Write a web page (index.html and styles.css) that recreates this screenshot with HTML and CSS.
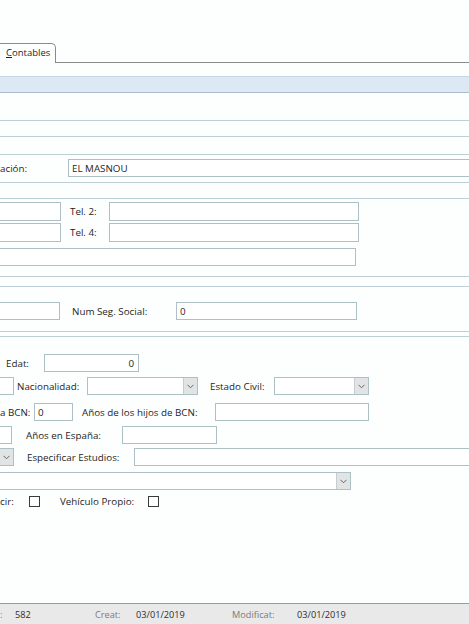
FILE: index.html
```html
<!DOCTYPE html>
<html lang="es">
<head>
<meta charset="utf-8">
<title>Ficha</title>
<link rel="stylesheet" href="styles.css">
</head>
<body>
<div class="page">
  <div class="tabs">
    <div class="tab"><span class="ul">C</span>ontables</div>
    <div class="tab-fill"></div>
  </div>
  <div class="band"></div>

  <div class="hl m27"></div>
  <div class="hl m15"></div>
  <div class="hl m17"></div>

  <div class="row r-pob">
    <div class="lbl w-pob">ación:</div>
    <div class="box w-pobbox">EL MASNOU</div>
  </div>

  <div class="hl m5"></div>
  <div class="hl m15"></div>

  <div class="row h19 r-tel1">
    <div class="box cut w101"></div>
    <div class="lbl ml9 w39">Tel. 2:</div>
    <div class="box w250"></div>
  </div>
  <div class="row h19 r-tel2">
    <div class="box cut w101"></div>
    <div class="lbl ml9 w39">Tel. 4:</div>
    <div class="box w250"></div>
  </div>
  <div class="row r-addr">
    <div class="box cut w396"></div>
  </div>

  <div class="hl m10"></div>
  <div class="hl m9"></div>

  <div class="row r-nss">
    <div class="box cut w100"></div>
    <div class="lbl ml12 w104">Num Seg. Social:</div>
    <div class="box w181">0</div>
  </div>

  <div class="hl m11"></div>
  <div class="hl m4"></div>

  <div class="row r-edat">
    <div class="lbl ml6 w38">Edat:</div>
    <div class="box w95 right">0</div>
  </div>

  <div class="row r-nac">
    <div class="box cut w54"></div>
    <div class="lbl ml3 w70">Nacionalidad:</div>
    <div class="combo w111"><span class="cval"></span><span class="btn"><svg width="7" height="5" viewBox="0 0 7 5"><path d="M0.5 0.8 L3.5 3.8 L6.5 0.8" fill="none" stroke="#666" stroke-width="1"/></svg></span></div>
    <div class="lbl ml12 w64">Estado Civil:</div>
    <div class="combo w95"><span class="cval"></span><span class="btn"><svg width="7" height="5" viewBox="0 0 7 5"><path d="M0.5 0.8 L3.5 3.8 L6.5 0.8" fill="none" stroke="#666" stroke-width="1"/></svg></span></div>
  </div>

  <div class="row r-bcn">
    <div class="lbl w34">a BCN:</div>
    <div class="box w39">0</div>
    <div class="lbl ml9 w133">Años de los hijos de BCN:</div>
    <div class="box w154"></div>
  </div>

  <div class="row r-esp">
    <div class="box cut w52"></div>
    <div class="lbl ml14 w96">Años en España:</div>
    <div class="box w95"></div>
  </div>

  <div class="row r-est">
    <div class="combo cut60 w74"><span class="cval"></span><span class="btn"><svg width="7" height="5" viewBox="0 0 7 5"><path d="M0.5 0.8 L3.5 3.8 L6.5 0.8" fill="none" stroke="#666" stroke-width="1"/></svg></span></div>
    <div class="lbl ml13 w107">Especificar Estudios:</div>
    <div class="box w340"></div>
  </div>

  <div class="row r-cmb">
    <div class="combo cut60 w411"><span class="cval"></span><span class="btn"><svg width="7" height="5" viewBox="0 0 7 5"><path d="M0.5 0.8 L3.5 3.8 L6.5 0.8" fill="none" stroke="#666" stroke-width="1"/></svg></span></div>
  </div>

  <div class="row r-chk">
    <div class="lbl w29">cir:</div>
    <div class="chk"></div>
    <div class="lbl ml20 w88">Vehículo Propio:</div>
    <div class="chk"></div>
  </div>

  <div class="status">
    <span class="s-lbl s-w1">:</span>
    <span class="s-val s-w2">582</span>
    <span class="s-lbl s-w3">Creat:</span>
    <span class="s-val s-w4">03/01/2019</span>
    <span class="s-lbl s-w5">Modificat:</span>
    <span class="s-val">03/01/2019</span>
  </div>
</div>
</body>
</html>
```

FILE: styles.css
```css
* { box-sizing: border-box; }
html, body { margin: 0; padding: 0; background: #fdfefe; }
body {
  font-family: "Open Sans", "Noto Sans", "DejaVu Sans", sans-serif;
  font-size: 9.8px;
  color: #1f1f1f;
}
.page {
  width: 469px;
  height: 624px;
  overflow: hidden;
  display: flex;
  flex-direction: column;
}

/* tabs */
.tabs { display: flex; height: 20px; margin-top: 43px; flex: none; }
.tab {
  margin-left: -5px;
  width: 61px;
  height: 20px;
  border: 1px solid #8a8a8a;
  border-bottom: none;
  border-top-right-radius: 5px;
  background: #fdfefe;
  padding-left: 10px;
  line-height: 18px;
  font-size: 9.5px;
  color: #1f1f1f;
}
.ul { text-decoration: underline; }
.tab-fill { flex: 1; border-bottom: 1px solid #8a8a8a; }

.band {
  margin-top: 13px;
  height: 17px;
  flex: none;
  background: #dce9f4;
  border-top: 1px solid #c4d8e6;
  border-bottom: 1px solid #a9bdcb;
}

/* horizontal group lines */
.hl { height: 1px; flex: none; background: #bcd0d5; }
.m4 { margin-top: 4px; }
.m5 { margin-top: 5px; }
.m9 { margin-top: 9px; }
.m10 { margin-top: 10px; }
.m11 { margin-top: 11px; }
.m15 { margin-top: 15px; }
.m17 { margin-top: 17px; }
.m27 { margin-top: 27px; }

/* rows */
.row { display: flex; align-items: center; height: 18px; flex: none; }
.row > * { flex: none; height: 100%; }
.h19 { height: 19px; }
.r-pob { margin-top: 4px; }
.r-tel1 { margin-top: 3px; }
.r-tel2 { margin-top: 2px; }
.r-addr { margin-top: 6px; }
.r-nss { margin-top: 15px; }
.r-edat { margin-top: 17px; }
.r-nac { margin-top: 5px; }
.r-bcn { margin-top: 8px; }
.r-esp { margin-top: 5px; }
.r-est { margin-top: 4px; }
.r-cmb { margin-top: 6px; }
.r-chk { margin-top: 6px; height: 11px; }

.lbl { display: flex; align-items: center; white-space: nowrap; overflow: visible; }
.box {
  border: 1px solid #adc0c5;
  background: #ffffff;
  padding-left: 3px;
  display: flex;
  align-items: center;
  white-space: nowrap;
  color: #1f1f1f;
}
.box.right { justify-content: flex-end; padding-right: 4px; }
.cut { margin-left: -40px; }
.cut60 { margin-left: -60px; }

.combo {
  border: 1px solid #adc0c5;
  background: #fff;
  display: flex;
}
.combo .cval { flex: 1; }
.combo .btn {
  width: 14px;
  background: #e1e4e5;
  border-left: 1px solid #c7cdcf;
  display: flex;
  align-items: center;
  justify-content: center;
}

.chk {
  width: 11px;
  height: 11px !important;
  border: 1px solid #3a3a3a;
  background: #fff;
}

.w-pob { width: 68px; }
.w-pobbox { width: 410px; }

.ml3 { margin-left: 3px; }
.ml6 { margin-left: 6px; }
.ml9 { margin-left: 9px; }
.ml12 { margin-left: 12px; }
.ml13 { margin-left: 13px; }
.ml14 { margin-left: 14px; }
.ml20 { margin-left: 20px; }

.w29 { width: 29px; }
.w34 { width: 34px; }
.w38 { width: 38px; }
.w39 { width: 39px; }
.w52 { width: 52px; }
.w54 { width: 54px; }
.w64 { width: 64px; }
.w70 { width: 70px; }
.w74 { width: 74px; }
.w88 { width: 88px; }
.w95 { width: 95px; }
.w96 { width: 96px; }
.w100 { width: 100px; }
.w101 { width: 101px; }
.w104 { width: 104px; }
.w107 { width: 107px; }
.w111 { width: 111px; }
.w133 { width: 133px; }
.w154 { width: 154px; }
.w181 { width: 181px; }
.w250 { width: 250px; }
.w340 { width: 340px; }
.w396 { width: 396px; }
.w411 { width: 411px; }

/* status bar */
.status {
  margin-top: auto;
  height: 21px;
  flex: none;
  background: #e9e9e9;
  border-top: 1px solid #9a9a9a;
  display: flex;
  align-items: center;
  font-size: 9.2px;
  white-space: nowrap;
}
.s-lbl { color: #7a7a7a; }
.s-val { color: #2e2e2e; }
.s-w1 { width: 15px; }
.s-w2 { width: 80px; }
.s-w3 { width: 41px; }
.s-w4 { width: 96px; }
.s-w5 { width: 65px; }
```
